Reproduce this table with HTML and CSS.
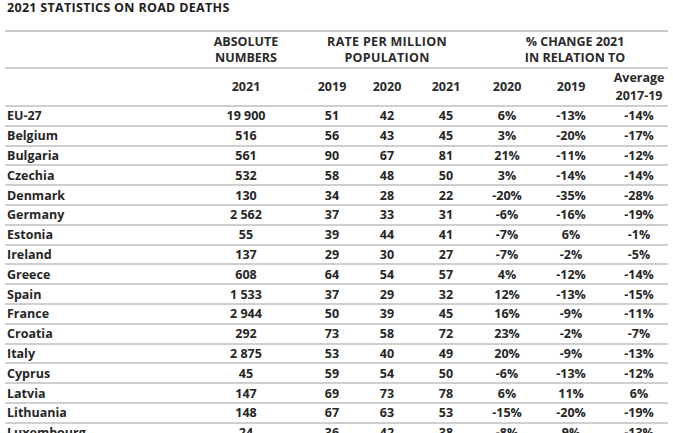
FILE: index.html
```html
<!DOCTYPE html>
<html lang="en">
<head>
<meta charset="utf-8">
<title>2021 statistics on road deaths</title>
<link rel="stylesheet" href="styles.css">
</head>
<body>
<div class="page">
  <h1 class="title">2021 STATISTICS ON ROAD DEATHS</h1>
  <table class="stats">
    <colgroup>
      <col class="c-country"><col class="c-abs"><col class="c-r19"><col class="c-r20"><col class="c-r21"><col class="c-p20"><col class="c-p19"><col class="c-avg">
    </colgroup>
    <thead>
      <tr class="h1">
        <th></th>
        <th>ABSOLUTE<br>NUMBERS</th>
        <th colspan="3" class="rate">RATE PER MILLION<br>POPULATION</th>
        <th colspan="3">% CHANGE 2021<br>IN RELATION TO</th>
      </tr>
      <tr class="h2">
        <th></th>
        <th>2021</th>
        <th>2019</th>
        <th>2020</th>
        <th>2021</th>
        <th>2020</th>
        <th>2019</th>
        <th>Average<br>2017-19</th>
      </tr>
    </thead>
    <tbody>
      <tr><td>EU-27</td><td>19 900</td><td>51</td><td>42</td><td>45</td><td>6%</td><td>-13%</td><td>-14%</td></tr>
      <tr><td>Belgium</td><td>516</td><td>56</td><td>43</td><td>45</td><td>3%</td><td>-20%</td><td>-17%</td></tr>
      <tr><td>Bulgaria</td><td>561</td><td>90</td><td>67</td><td>81</td><td>21%</td><td>-11%</td><td>-12%</td></tr>
      <tr><td>Czechia</td><td>532</td><td>58</td><td>48</td><td>50</td><td>3%</td><td>-14%</td><td>-14%</td></tr>
      <tr><td>Denmark</td><td>130</td><td>34</td><td>28</td><td>22</td><td>-20%</td><td>-35%</td><td>-28%</td></tr>
      <tr><td>Germany</td><td>2 562</td><td>37</td><td>33</td><td>31</td><td>-6%</td><td>-16%</td><td>-19%</td></tr>
      <tr><td>Estonia</td><td>55</td><td>39</td><td>44</td><td>41</td><td>-7%</td><td>6%</td><td>-1%</td></tr>
      <tr><td>Ireland</td><td>137</td><td>29</td><td>30</td><td>27</td><td>-7%</td><td>-2%</td><td>-5%</td></tr>
      <tr><td>Greece</td><td>608</td><td>64</td><td>54</td><td>57</td><td>4%</td><td>-12%</td><td>-14%</td></tr>
      <tr><td>Spain</td><td>1 533</td><td>37</td><td>29</td><td>32</td><td>12%</td><td>-13%</td><td>-15%</td></tr>
      <tr><td>France</td><td>2 944</td><td>50</td><td>39</td><td>45</td><td>16%</td><td>-9%</td><td>-11%</td></tr>
      <tr><td>Croatia</td><td>292</td><td>73</td><td>58</td><td>72</td><td>23%</td><td>-2%</td><td>-7%</td></tr>
      <tr><td>Italy</td><td>2 875</td><td>53</td><td>40</td><td>49</td><td>20%</td><td>-9%</td><td>-13%</td></tr>
      <tr><td>Cyprus</td><td>45</td><td>59</td><td>54</td><td>50</td><td>-6%</td><td>-13%</td><td>-12%</td></tr>
      <tr><td>Latvia</td><td>147</td><td>69</td><td>73</td><td>78</td><td>6%</td><td>11%</td><td>6%</td></tr>
      <tr><td>Lithuania</td><td>148</td><td>67</td><td>63</td><td>53</td><td>-15%</td><td>-20%</td><td>-19%</td></tr>
      <tr><td>Luxembourg</td><td>24</td><td>36</td><td>42</td><td>38</td><td>-8%</td><td>9%</td><td>-13%</td></tr>
    </tbody>
  </table>
</div>
</body>
</html>
```

FILE: styles.css
```css
html, body {
  margin: 0;
  padding: 0;
  background: #ffffff;
}

body {
  width: 673px;
  height: 433px;
  overflow: hidden;
  font-family: "Open Sans", Lato, "DejaVu Sans", sans-serif;
  font-weight: 700;
  color: #262626;
}

.page {
  padding: 0 5px 0 5px;
}

.title {
  margin: 0;
  padding: 0 0 0 2px;
  height: 30px;
  font-size: 12.5px;
  line-height: 15px;
  font-weight: 700;
  letter-spacing: 0.3px;
  color: #1e1e1e;
}

.stats {
  width: 663px;
  border-collapse: collapse;
  table-layout: fixed;
  font-size: 12.5px;
  border-top: 2px solid #c9c9c9;
}

.c-country { width: 187px; }
.c-abs { width: 108px; }
.c-r19 { width: 64px; }
.c-r20 { width: 46px; }
.c-r21 { width: 72px; }
.c-p20 { width: 50px; }
.c-p19 { width: 78px; }
.c-avg { width: 58px; }

.stats th,
.stats td {
  padding: 0;
  text-align: center;
  border-bottom: 2px solid #cfcfcf;
  white-space: nowrap;
}

.stats th {
  font-weight: 700;
  color: #2a2a2a;
}

.h1 th {
  height: 35px;
  line-height: 16px;
  font-size: 12.5px;
}

.h1 th.rate {
  padding-right: 8px;
  letter-spacing: 0.3px;
}

.h2 th {
  height: 36px;
  line-height: 18px;
  font-size: 12.5px;
}

.stats td {
  height: 17.8px;
  line-height: 17px;
}

.stats td:first-child {
  text-align: left;
  padding-left: 2px;
}
```
